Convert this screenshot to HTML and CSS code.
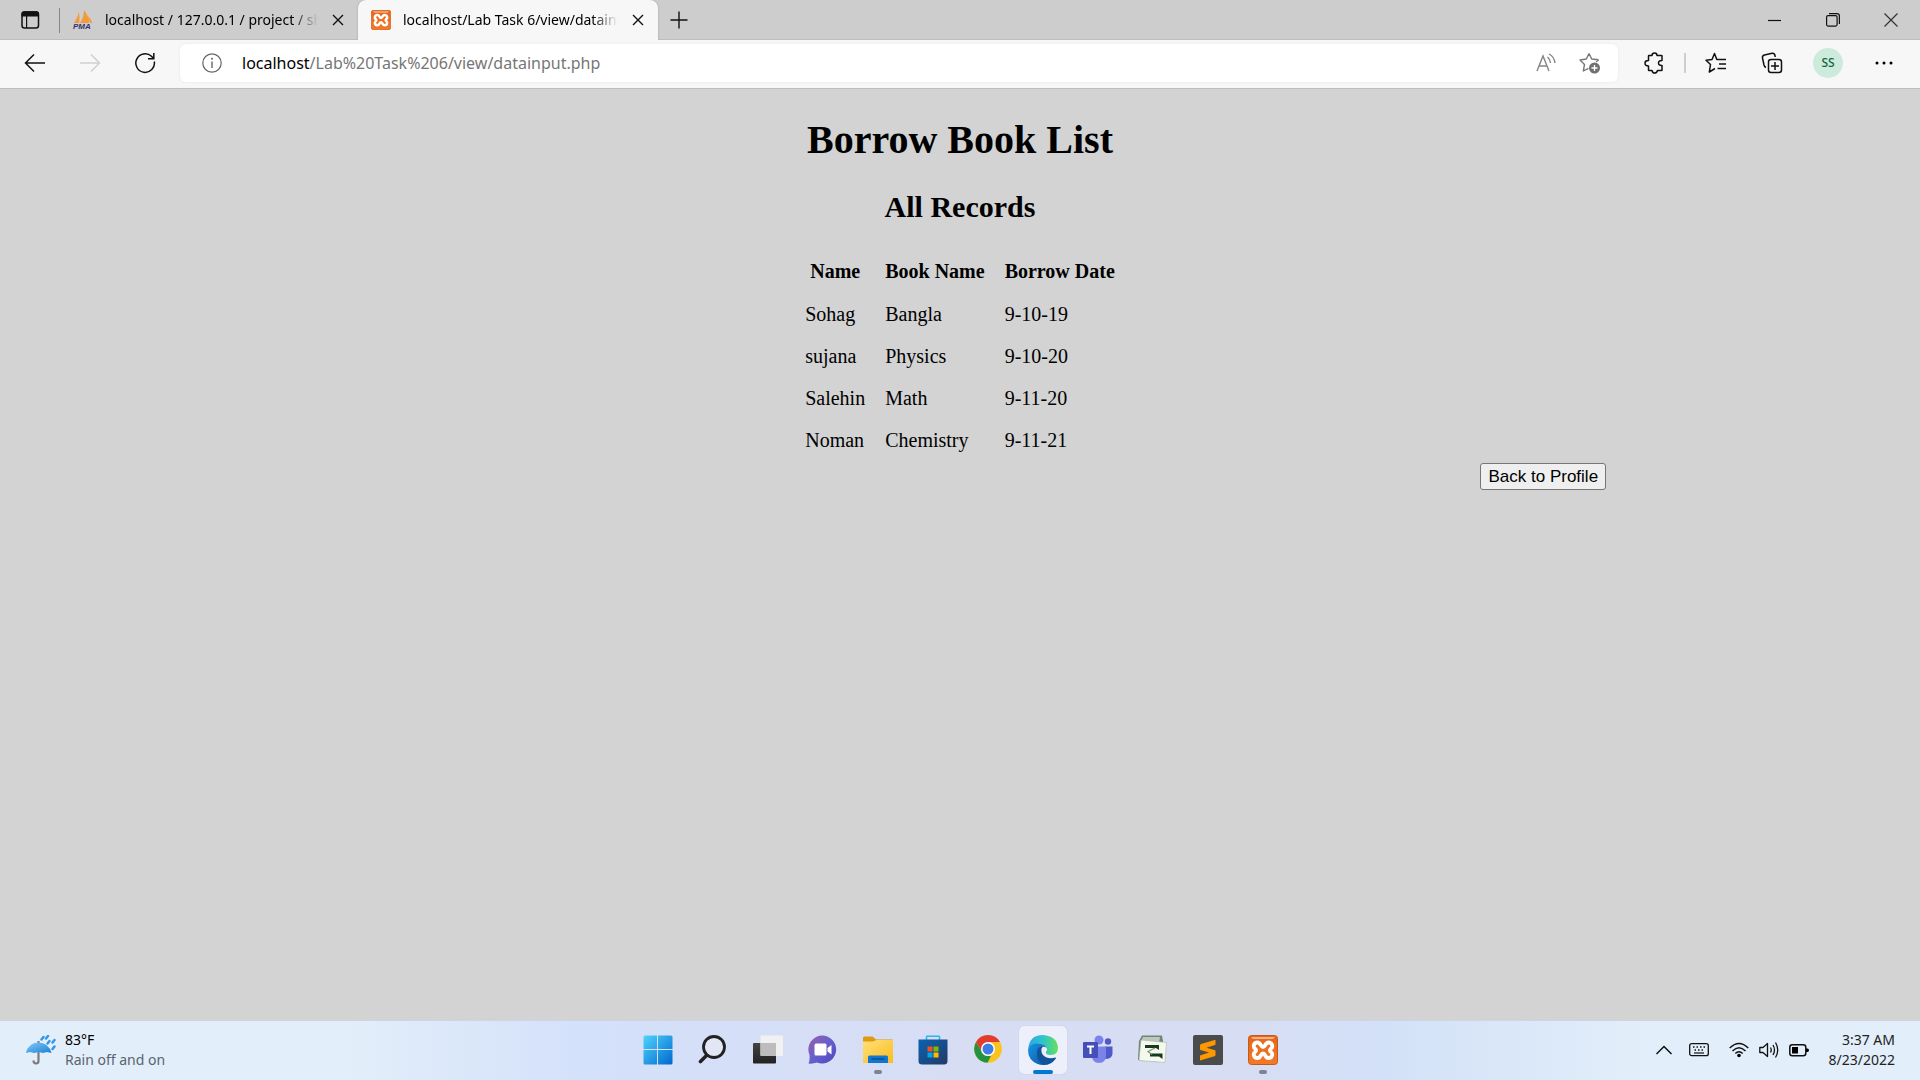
FILE: index.html
```html
<!DOCTYPE html>
<html lang="en">
<head>
<meta charset="utf-8">
<title>localhost/Lab Task 6/view/datainput.php</title>
<link rel="stylesheet" href="styles.css">
</head>
<body>
<svg class="defs" aria-hidden="true">
  <defs>
    <linearGradient id="orange" x1="0" y1="0" x2="0" y2="1"><stop offset="0" stop-color="#e5651a"/><stop offset="1" stop-color="#f47a26"/></linearGradient>
    <linearGradient id="win" x1="0" y1="0" x2="1" y2="1"><stop offset="0" stop-color="#4fd4fb"/><stop offset="1" stop-color="#0068d0"/></linearGradient>
    <linearGradient id="dark" x1="0" y1="0" x2="0" y2="1"><stop offset="0" stop-color="#444"/><stop offset="1" stop-color="#222"/></linearGradient>
    <linearGradient id="chat" x1="0" y1="0" x2="1" y2="1"><stop offset="0" stop-color="#9a5fa8"/><stop offset=".5" stop-color="#6660cc"/><stop offset="1" stop-color="#4a48c0"/></linearGradient>
    <linearGradient id="folder" x1="0" y1="0" x2="1" y2="1"><stop offset="0" stop-color="#ffe07a"/><stop offset="1" stop-color="#fcbc1c"/></linearGradient>
    <linearGradient id="store" x1="0" y1="0" x2="1" y2="1"><stop offset="0" stop-color="#0a62b4"/><stop offset="1" stop-color="#243a63"/></linearGradient>
    <linearGradient id="edgeTop" x1="0" y1="0" x2="1" y2="0"><stop offset="0" stop-color="#2ca8e8"/><stop offset=".5" stop-color="#2ec4cc"/><stop offset="1" stop-color="#66e05a"/></linearGradient>
    <linearGradient id="edgeLow" x1="0" y1="0" x2="1" y2="1"><stop offset="0" stop-color="#1795e2"/><stop offset="1" stop-color="#0c59a4"/></linearGradient>
    <linearGradient id="umb" x1="0" y1="0" x2="1" y2="1"><stop offset="0" stop-color="#7fcbfa"/><stop offset="1" stop-color="#1b7fd4"/></linearGradient>
    <symbol id="xampp" viewBox="0 0 30 30">
      <rect x=".5" y=".5" width="29" height="29" rx="3" fill="url(#orange)" stroke="#c8581a"/>
      <path d="M3 2H27L25 4H5Z" fill="#f7b283"/>
      <path d="M15 12C12.500 12 13 7.500 9.500 7.500C5.500 7.500 4.500 12 7.500 14Q8.500 15.300 7.500 16.500C4.500 18.500 5.500 23 9.500 23C13 23 12.500 18.500 15 18.500C17.500 18.500 17 23 20.500 23C24.500 23 25.500 18.500 22.500 16.500Q21.500 15.300 22.500 14C25.500 12 24.500 7.500 20.500 7.500C17 7.500 17.500 12 15 12Z" fill="none" stroke="#fff" stroke-width="3.800" stroke-linejoin="round"/>
    </symbol>
    <symbol id="cross" viewBox="0 0 12 12"><path d="M1 1L11 11M11 1L1 11" fill="none" stroke="currentColor" stroke-width="1.400"/></symbol>
  </defs>
</svg>

<header class="browser">
  <div class="tab-strip">
    <button class="tab-menu" aria-label="Tab actions menu"><svg width="20" height="20" viewBox="0 0 20 20"><rect x="2" y="2" width="16.500" height="16" rx="2.500" fill="none" stroke="#111" stroke-width="1.500"/><path d="M1.500 6.500V4Q1.500 1.200 4 1.200H16.500Q19 1.200 19 4V6.500ZM6 6H7.200V18H6Z" fill="#111"/></svg></button>
    <div class="tab">
      <svg width="20" height="20" viewBox="0 0 20 20"><path d="M1 13Q5 7 6 2Q7 8 6 13ZM7 13Q11 7 11 0Q17 8 16 13ZM17 13L15 6Q19 10 19 13Z" fill="#f59a38"/><text class="pma" x="0" y="19">PMA</text></svg>
      <span class="tab-title">localhost / 127.0.0.1 / project / shop</span>
      <button class="tab-close" aria-label="Close tab"><svg width="12" height="12"><use href="#cross"/></svg></button>
    </div>
    <div class="tab tab-active">
      <svg width="20" height="20"><use href="#xampp"/></svg>
      <span class="tab-title">localhost/Lab Task 6/view/datainput.php</span>
      <button class="tab-close" aria-label="Close tab"><svg width="12" height="12"><use href="#cross"/></svg></button>
    </div>
    <button class="new-tab" aria-label="New tab"><svg width="18" height="18" viewBox="0 0 18 18"><path d="M9 .5V17.500M.5 9H17.500" stroke="#111" stroke-width="1.400"/></svg></button>
    <div class="window-buttons">
      <button aria-label="Minimize"><svg width="14" height="14" viewBox="0 0 14 14"><path d="M0 7.500H13" stroke="#111" stroke-width="1.200"/></svg></button>
      <button aria-label="Restore"><svg width="14" height="14" viewBox="0 0 14 14"><rect x=".6" y="2.600" width="10.500" height="10.500" rx="1.500" fill="none" stroke="#111" stroke-width="1.200"/><path d="M3 .6H11Q13.400 .6 13.400 3V11" fill="none" stroke="#111" stroke-width="1.200"/></svg></button>
      <button aria-label="Close"><svg width="14" height="14" viewBox="0 0 14 14"><path d="M.5 .5L13.500 13.500M13.500 .5L.5 13.500" stroke="#333" stroke-width="1.200"/></svg></button>
    </div>
  </div>

  <div class="toolbar">
    <button class="tool" aria-label="Back"><svg width="22" height="20" viewBox="0 0 22 20"><path d="M21 10H1.500M10 1.500L1.500 10L10 18.500" fill="none" stroke="#111" stroke-width="1.500"/></svg></button>
    <button class="tool" aria-label="Forward" disabled><svg width="22" height="20" viewBox="0 0 22 20"><path d="M1 10H20.500M12 1.500L20.500 10L12 18.500" fill="none" stroke="#cfcfcf" stroke-width="1.500"/></svg></button>
    <button class="tool" aria-label="Refresh"><svg width="22" height="22" viewBox="0 0 22 22"><path d="M20.300 9.500A9.300 9.300 0 1 1 17.500 4.300L19.500 6.500M19.800 1V6.800H14" fill="none" stroke="#111" stroke-width="1.500"/></svg></button>
    <div class="address">
      <svg width="20" height="20" viewBox="0 0 20 20"><circle cx="10" cy="10" r="9.200" fill="none" stroke="#666" stroke-width="1.200"/><path d="M10 8.500V15" stroke="#666" stroke-width="1.400"/><circle cx="10" cy="5.800" r="1" fill="#666"/></svg>
      <p class="url"><b>localhost</b>/Lab%20Task%206/view/datainput.php</p>
      <button class="address-tool" aria-label="Read aloud"><svg width="20" height="20" viewBox="0 0 20 20"><path d="M1 18L7 3L13 18M3 13H11M11.500 4Q14 6 14.500 10M13 1Q18.500 4 19 10" fill="none" stroke="#858585" stroke-width="1.400"/></svg></button>
      <button class="address-tool" aria-label="Add to favorites"><svg width="22" height="22" viewBox="0 0 22 22"><path d="M10 1.500L12.700 7L19.500 7.800M10 1.500L7.300 7L1 8L5.500 12.500L4.300 19L9.500 16.300" fill="none" stroke="#777" stroke-width="1.400" stroke-linejoin="round"/><path d="M19.500 8L17 10" stroke="#777" stroke-width="1.300"/><circle cx="15.500" cy="16" r="5.500" fill="#707070"/><path d="M15.500 13V19M12.500 16H18.500" stroke="#fff" stroke-width="1.300"/></svg></button>
    </div>
    <div class="tool-group">
      <button class="tool" aria-label="Extensions"><svg width="20" height="22" viewBox="0 0 20 22"><path d="M5 3.500H8Q8 1 10.500 1Q13 1 13 3.500H17.500Q18 3.500 18 4V8.500Q14.500 8.300 14.500 11Q14.500 13.700 18 13.500V18Q18 18.500 17.500 18.500H13.500Q13 21 10.500 21Q8.500 21 8 18.500H5Q4.500 18.500 4.500 18V14Q1 14 1 11Q1 8.500 4.500 8.500V4Q4.500 3.500 5 3.500Z" fill="none" stroke="#111" stroke-width="1.500" stroke-linejoin="round"/></svg></button>
      <span class="divider"></span>
      <button class="tool" aria-label="Favorites"><svg width="22" height="22" viewBox="0 0 22 22"><path d="M13 7.500H11.800L9.500 1.500L7 7.500L1 8.200L5.500 12.500L4.300 20L10 16.500M13 7.500H21M14 12H21M12.500 16.500H21" fill="none" stroke="#111" stroke-width="1.500" stroke-linejoin="round"/></svg></button>
      <button class="tool" aria-label="Collections"><svg width="22" height="22" viewBox="0 0 22 22"><rect x="7.500" y="7.500" width="13" height="13" rx="2.500" fill="none" stroke="#111" stroke-width="1.500"/><path d="M14 10V18M10 14H18M5 15.500Q3.500 15 3 13L1.500 6Q1 3.800 3.500 3L11 1.300Q13.500 1 14 3.500L14.200 5" fill="none" stroke="#111" stroke-width="1.500"/></svg></button>
      <button class="tool" aria-label="Profile"><span class="avatar">SS</span></button>
      <button class="tool" aria-label="Settings and more"><svg width="18" height="6" viewBox="0 0 18 6"><circle cx="2" cy="3" r="1.500"/><circle cx="9" cy="3" r="1.500"/><circle cx="16" cy="3" r="1.500"/></svg></button>
    </div>
  </div>
</header>

<main class="page">
  <h1>Borrow Book List</h1>
  <h2>All Records</h2>
  <table>
    <thead><tr><th>Name</th><th>Book Name</th><th>Borrow Date</th></tr></thead>
    <tbody>
      <tr><td>Sohag</td><td>Bangla</td><td>9-10-19</td></tr>
      <tr><td>sujana</td><td>Physics</td><td>9-10-20</td></tr>
      <tr><td>Salehin</td><td>Math</td><td>9-11-20</td></tr>
      <tr><td>Noman</td><td>Chemistry</td><td>9-11-21</td></tr>
    </tbody>
  </table>
  <button class="back">Back to Profile</button>
</main>

<footer class="taskbar">
  <div class="weather">
    <svg width="30" height="30" viewBox="0 0 30 30"><path d="M12.500 6V26Q12.500 28.500 10 28.500Q7.500 28.500 7.500 25.500" fill="none" stroke="#81797a" stroke-width="2.200"/><path d="M0 18Q2 8 12.500 7.500Q23 8 25.500 18L21 17L17 18L12.500 17L8 18L4 17Z" fill="url(#umb)"/><path d="M15.500 4.500L17.500 2M20 3.500L22 1M21.500 8.500L23.500 6M26.500 7.500L28.500 5M26.500 14L28.500 11.500" stroke="#3195e8" stroke-width="2.400" stroke-linecap="round"/></svg>
    <p><b>83°F</b><br>Rain off and on</p>
  </div>
  <nav class="apps">
    <button aria-label="Start"><svg width="30" height="30" viewBox="0 0 30 30"><path d="M2 .5H14V14H.5V2Q.5 .5 2 .5ZM15 .5H28Q29.500 .5 29.500 2V14H15ZM.5 15H14V29.500H2Q.5 29.500 .5 28ZM15 15H29.500V28Q29.500 29.500 28 29.500H15Z" fill="url(#win)"/></svg></button>
    <button aria-label="Search"><svg width="30" height="30" viewBox="0 0 30 30"><circle cx="16" cy="12" r="10.500" fill="#e3e6f3" stroke="#222" stroke-width="2.800"/><path d="M8.500 20.500L2.500 26.500" stroke="#222" stroke-width="3.600" stroke-linecap="round"/></svg></button>
    <button aria-label="Task view"><svg width="30" height="30" viewBox="0 0 30 30"><rect y="8" width="23" height="20.500" rx="1" fill="url(#dark)"/><rect x="7.500" y=".5" width="22.500" height="20.500" rx="1" fill="#f1f1f1"/><path d="M7.500 8H23V21H8Q7.500 21 7.500 20Z" fill="#bdbdbd"/></svg></button>
    <button aria-label="Chat"><svg width="30" height="30" viewBox="0 0 30 30"><path d="M15 .5A14 14 0 1 1 9 27.500Q5 29 .5 28.500Q2 25 1.500 20A14 14 0 0 1 15 .5Z" fill="url(#chat)"/><rect x="6.500" y="8.500" width="12" height="12" rx="1.500" fill="#fff"/><path d="M19.500 13L23.500 10V19.500L19.500 16.500Z" fill="#fff"/></svg></button>
    <button class="running" aria-label="File Explorer"><svg width="30" height="30" viewBox="0 0 30 30"><path d="M0 3Q0 1.500 1.500 1.500H9.500L13 4.500H29Q30 4.500 30 5.500V10H0Z" fill="#dd9a12"/><path d="M0 6.500H10L13.500 5H30V28H0Z" fill="url(#folder)"/><path d="M5 28V22Q5 20.500 6.500 20.500H23.500Q25 20.500 25 22V28Z" fill="#1178d0"/><path d="M9 24H21" stroke="#0b4d91" stroke-width="1.500" stroke-linecap="round"/></svg></button>
    <button aria-label="Microsoft Store"><svg width="30" height="30" viewBox="0 0 30 30"><path d="M8.500 6V1.800Q8.500 1.200 9.200 1.200H20.800Q21.500 1.200 21.500 1.800V6" fill="none" stroke="#28b9ec" stroke-width="1.600"/><path d="M.5 4.500H29.500V26Q29.500 29.500 26 29.500H4Q.5 29.500 .5 26Z" fill="url(#store)"/><path d="M9.500 11.500H14.500V16.500H9.500Z" fill="#f25022"/><path d="M15.500 11.500H20.500V16.500H15.500Z" fill="#7fba00"/><path d="M9.500 17.500H14.500V22.500H9.500Z" fill="#00a4ef"/><path d="M15.500 17.500H20.500V22.500H15.500Z" fill="#ffb900"/></svg></button>
    <button aria-label="Chrome"><svg width="30" height="30" viewBox="0 0 30 30"><circle cx="15" cy="14" r="13.800" fill="#fcc31e"/><path d="M3 7.100A13.800 13.800 0 0 1 27 7.100H15L9 17.500Z" fill="#e33b2e"/><path d="M3 7.100L9 17.500Q11 21 15 21H18L14.500 27.800A13.800 13.800 0 0 1 3 7.100Z" fill="#229342"/><circle cx="15" cy="14" r="7" fill="#fff"/><circle cx="15" cy="14" r="5.500" fill="#3b7de9"/></svg></button>
    <button class="running current" aria-label="Edge"><svg width="30" height="30" viewBox="0 0 30 30"><path d="M0 15Q1 0 15 0Q29 1 30 12.500Q30 20 23 20Q17 20 18 16.500Q20 15 18 12Q14 7 7 9Q2 10.500 0 15Z" fill="url(#edgeTop)"/><path d="M0 15Q2 8 9.500 8.200Q16 8.500 18.500 12.500Q11 10 9.500 17Q9 25 17 29.700Q14 30.500 9.500 29Q0 25 0 15Z" fill="url(#edgeLow)"/><path d="M9 16Q10 11 15 11.500Q11.500 15 15 20Q20 25 27.500 22.500Q28.500 22.500 27.500 24Q23 30 16 30Q8 26 9 16Z" fill="#11529b"/></svg></button>
    <button aria-label="Teams"><svg width="30" height="30" viewBox="0 0 30 30"><circle cx="25" cy="6.500" r="3.200" fill="#5059c9"/><circle cx="16" cy="5" r="4.500" fill="#7b83eb"/><path d="M22 11.500H29.500V19Q29 24 22 24Z" fill="#5059c9"/><path d="M9 11.500H23V20Q23 28 16 28Q9 28 9 20Z" fill="#7b83eb"/><rect y="7" width="15" height="16" rx="1" fill="#464eb8"/><path d="M4 11.500H11M7.500 11.500V19" stroke="#fff" stroke-width="2"/></svg></button>
    <button aria-label="Project"><svg width="30" height="30" viewBox="0 0 30 30"><path d="M4 .5H24L25 6L22 27L0 25L1 6Z" fill="#6f8577"/><path d="M5 2H22L21 8L3 6Z" fill="#bac9bf"/><path d="M3 5L28.500 7.500L27 27.500L1 25.500Z" fill="#f5f8ec" stroke="#a9b6a7" stroke-width=".6"/><path d="M7 10H21V15L18 13H7ZM12 18.500H24.500V24L21 21.500H12Z" fill="#163a1c"/><path d="M17 13L10 16.500L14 19.500" fill="none" stroke="#78946f" stroke-width="1.200"/></svg></button>
    <button aria-label="Sublime Text"><svg width="30" height="30" viewBox="0 0 30 30"><rect width="30" height="30" rx="2" fill="#4b4b4b"/><path d="M7 10.500Q7 9.500 8 9L22.500 4.800V9.800L13.500 12.700L22 15.200Q22.500 15.500 22.500 16V20Q22.500 21 21.500 21.300L7 25.500V20.500L16 17.500L7.500 15Q7 14.800 7 14.200Z" fill="#ff9800"/></svg></button>
    <button class="running" aria-label="XAMPP"><svg width="30" height="30"><use href="#xampp"/></svg></button>
  </nav>
  <div class="tray">
    <button aria-label="Show hidden icons"><svg width="18" height="20" viewBox="0 0 18 20"><path d="M1.500 14L9 6.500L16.500 14" fill="none" stroke="#111" stroke-width="1.500"/></svg></button>
    <button aria-label="Touch keyboard"><svg width="20" height="20" viewBox="0 0 20 20"><rect x=".7" y="3.700" width="18.600" height="12" rx="2" fill="none" stroke="#111" stroke-width="1.300"/><path d="M4 7H17M5.500 10H15" stroke="#111" stroke-width="1.500" stroke-dasharray="1.500 2"/><path d="M5 13H15" stroke="#111" stroke-width="1.200"/></svg></button>
    <button class="status" aria-label="Network, volume and battery">
      <svg width="20" height="20" viewBox="0 0 20 20"><path d="M.7 8Q10-1 19.300 8M3.500 11Q10 4.500 16.500 11M6.300 13.500Q10 10 13.700 13.500" fill="none" stroke="#111" stroke-width="1.400"/><circle cx="10" cy="15.500" r="1.800"/></svg>
      <svg width="20" height="20" viewBox="0 0 20 20"><path d="M.8 7.500H4L8.500 3.500V16.500L4 12.500H.8ZM11.500 7.500Q13 10 11.500 12.500M14 5Q17 10 14 15M16.500 2.500Q21 10 16.500 17.500" fill="none" stroke="#111" stroke-width="1.300" stroke-linejoin="round"/></svg>
      <svg width="20" height="20" viewBox="0 0 20 20"><rect x=".8" y="4.800" width="16" height="11" rx="2.500" fill="none" stroke="#111" stroke-width="1.500"/><path d="M3 7H9V13.600H3ZM17 8.500H18.500Q20 8.500 20 10.300Q20 12 18.500 12H17Z"/></svg>
    </button>
    <p class="clock">3:37 AM<br>8/23/2022</p>
  </div>
</footer>
</body>
</html>
```

FILE: styles.css
```css
* { box-sizing: border-box; }

body {
  margin: 0;
  min-height: 100vh;
  display: flex;
  flex-direction: column;
  background: #d3d3d3;
  color: #000;
  font-family: "Noto Sans", sans-serif;
}

p { margin: 0; }
b { font-weight: 400; color: #000; }
.defs { position: absolute; width: 0; height: 0; }
svg { flex: none; display: block; }

.browser button,
.taskbar button {
  display: flex;
  align-items: center;
  justify-content: center;
  padding: 0;
  border: 0;
  background: none;
  color: #111;
  font: inherit;
}

/* Tab strip */
.tab-strip {
  display: flex;
  height: 40px;
  background: #cdcdcd;
  box-shadow: inset 0 -1px #bdbdbd;
  font-size: 14px;
}
.browser .tab-menu {
  width: 60px;
  padding-right: 1px;
  background: linear-gradient(#888, #888) right center / 1px 25px no-repeat;
}
.tab {
  display: flex;
  align-items: center;
  width: 298px;
  padding: 0 12px 0 13px;
  gap: 12px;
}
.tab-active {
  width: 300px;
  background: #f7f7f7;
  border-radius: 8px 8px 0 0;
  box-shadow: 0 0 2px #999;
  clip-path: inset(0 -3px 0 -3px);
}
.tab-title {
  flex: 1;
  padding-bottom: 2px;
  overflow: hidden;
  white-space: nowrap;
  -webkit-mask-image: linear-gradient(90deg, #000 88%, transparent);
  mask-image: linear-gradient(90deg, #000 88%, transparent);
}
.browser .tab-close { width: 16px; height: 20px; }
.pma { font: italic 700 8px "Liberation Sans", sans-serif; fill: #33336b; }
.browser .new-tab { width: 42px; }
.window-buttons { display: flex; margin-left: auto; }
.window-buttons button { width: 58px; }

/* Toolbar */
.toolbar {
  display: flex;
  align-items: center;
  height: 49px;
  padding: 0 8px 2px 7px;
  background: #f7f7f7;
  border-bottom: 1px solid #bdbdbd;
}
.browser .tool { width: 55px; height: 38px; }
.tool-group { display: flex; align-items: center; }
.browser .tool-group .tool { width: 56px; }
.address {
  flex: 1;
  display: flex;
  align-items: center;
  height: 38px;
  margin: 0 8px;
  padding: 0 16px 0 22px;
  gap: 20px;
  background: #fff;
  border-radius: 6px;
  box-shadow: 0 0 3px #e6e6e6;
}
.url { flex: 1; color: #767676; font-size: 16px; }
.browser .address-tool { width: 24px; height: 24px; }
.divider { width: 2px; height: 20px; margin: 0 2px; background: #cfcfcf; }
.avatar {
  width: 30px;
  height: 30px;
  border-radius: 50%;
  background: #cdebdc;
  color: #14633f;
  font-size: 12px;
  font-weight: 500;
  line-height: 30px;
}

/* Page content */
.page {
  flex: 1;
  display: flex;
  flex-direction: column;
  align-items: center;
  padding-top: 28px;
  font: 20px "Liberation Serif", serif;
}
h1 { margin: 0 0 27px; font-size: 40px; line-height: 46px; }
h2 { margin: 0 0 25px; font-size: 30px; line-height: 34px; }
table { border-collapse: collapse; line-height: 22px; }
th, td { padding: 10px; text-align: left; }
th { text-align: center; line-height: 24px; }
.back {
  align-self: flex-end;
  margin: 2px 16.35% 0 0;
  padding: 1px 7px;
  border: 1px solid #767676;
  border-radius: 3px;
  background: #efefef;
  color: #000;
  font: 17px/23px "Liberation Sans", sans-serif;
}

/* Taskbar */
.taskbar {
  display: grid;
  grid-template-columns: 1fr auto 1fr;
  align-items: center;
  height: 60px;
  box-shadow: inset 0 1px #ccd5e6;
  background: linear-gradient(90deg, #e2eef9 18%, #d4e1fa 30%, #d7ddf3 52%, #d7ddf3 64%, #d3e1f8 72%, #e2eef9 86%);
  font-size: 14px;
  line-height: 20px;
}
.weather {
  display: flex;
  align-items: center;
  gap: 9px;
  padding-left: 26px;
  color: #5a6470;
}
.apps { display: flex; gap: 7px; }
.taskbar .apps button { position: relative; width: 48px; height: 48px; border-radius: 5px; }
.taskbar .apps .current { background: #edf0fa; box-shadow: 0 0 1px #a9b0c4; }
.running::after {
  content: "";
  position: absolute;
  bottom: 0;
  width: 8px;
  height: 4px;
  border-radius: 2px;
  background: #7d8390;
}
.current::after { width: 20px; background: #0078d4; }
.tray {
  display: flex;
  justify-content: flex-end;
  align-items: center;
  gap: 16px;
  padding-right: 25px;
}
.taskbar .status { gap: 10px; padding: 0 4px; }
.clock { text-align: right; color: #222; }
```
